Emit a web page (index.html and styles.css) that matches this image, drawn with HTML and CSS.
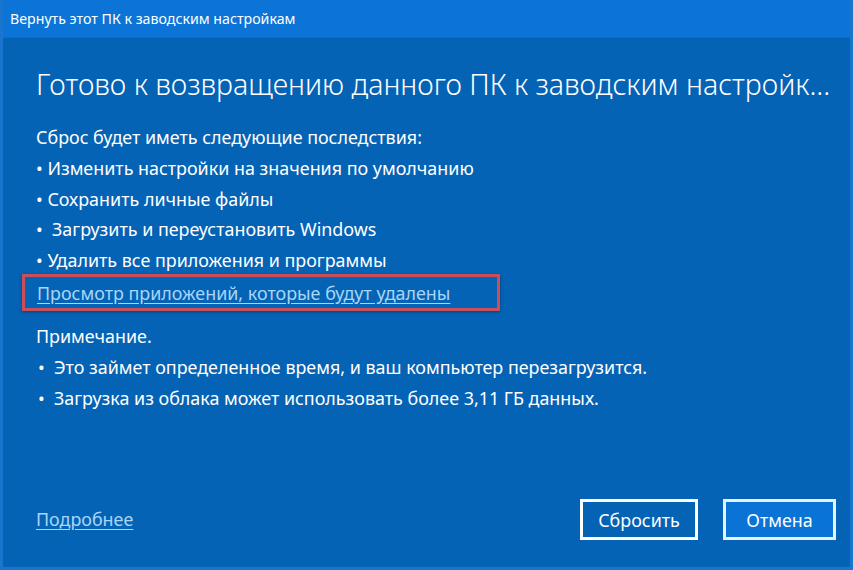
FILE: index.html
```html
<!DOCTYPE html>
<html lang="ru">
<head>
  <meta charset="UTF-8" />
  <meta name="viewport" content="width=device-width, initial-scale=1.0"/>
  <title>Вернуть этот ПК к заводским настройкам</title>
  <link rel="stylesheet" href="styles.css">
</head>
<body>

  <div class="window">
    <!-- Title bar -->
    <div class="titlebar">Вернуть этот ПК к заводским настройкам</div>

    <div class="content">
      <h1 class="heading">Готово к возвращению данного ПК к заводским настройк...</h1>

      <p class="line">Сброс будет иметь следующие последствия:</p>
      <p class="line">• Изменить настройки на значения по умолчанию</p>
      <p class="line">• Сохранить личные файлы</p>
      <p class="line">•&nbsp; Загрузить и переустановить Windows</p>
      <p class="line">• Удалить все приложения и программы</p>

      <div class="highlight">
        <a href="#" class="link">Просмотр приложений, которые будут удалены</a>
      </div>

      <p class="line note">Примечание.</p>
      <ul class="notes">
        <li>Это займет определенное время, и ваш компьютер перезагрузится.</li>
        <li>Загрузка из облака может использовать более 3,11 ГБ данных.</li>
      </ul>
    </div>

    <!-- Footer -->
    <div class="footer">
      <a href="#" class="link">Подробнее</a>
      <div class="buttons">
        <button class="btn">Сбросить</button>
        <button class="btn btn-primary">Отмена</button>
      </div>
    </div>
  </div>

</body>
</html>
```

FILE: styles.css
```css
* {
  box-sizing: border-box;
  margin: 0;
  padding: 0;
}

body {
  font-family: "Segoe UI", "Noto Sans", sans-serif;
  background: #0563b5;
  color: #fff;
}

.window {
  width: 853px;
  height: 570px;
  display: flex;
  flex-direction: column;
  background: #0563b5;
  border-left: 3px solid #1a75cf;
  border-right: 3px solid #1a75cf;
  border-bottom: 3px solid #1a75cf;
}

.titlebar {
  height: 38px;
  line-height: 38px;
  padding-left: 7px;
  font-size: 14.2px;
  background: #0b74d6;
  border-bottom: 1px solid #0d6cc4;
}

.content {
  flex: 1;
  padding: 26px 0 0 33px;
}

.heading {
  font-size: 28.5px;
  font-weight: 300;
  line-height: 40px;
  white-space: nowrap;
  overflow: hidden;
  margin-bottom: 18px;
}

.line {
  font-size: 17.9px;
  line-height: 30.8px;
}

.highlight {
  width: 478px;
  height: 37px;
  margin: -2px 0 0 -14px;
  padding: 2px 0 0 12px;
  border: 3px solid #c9505a;
  box-shadow: 0 1px 3px rgba(0, 0, 0, 0.35);
}

.link {
  color: #a8d6f8;
  font-size: 17.9px;
  line-height: 28px;
  text-decoration: underline;
  text-underline-offset: 3px;
}

.note {
  margin-top: 10px;
}

.notes {
  list-style: none;
}

.notes li {
  position: relative;
  padding-left: 18px;
  font-size: 17.9px;
  line-height: 30.8px;
}

.notes li::before {
  content: "•";
  position: absolute;
  left: 2px;
}

.footer {
  height: 96px;
  display: flex;
  align-items: flex-start;
  justify-content: space-between;
  padding: 28px 14px 0 33px;
}

.footer .link {
  margin-top: 6px;
}

.buttons {
  display: flex;
  gap: 25px;
}

.btn {
  width: 118px;
  height: 41px;
  font-family: "Segoe UI", "Noto Sans", sans-serif;
  font-size: 17.9px;
  color: #fff;
  background: #0563b5;
  border: 3px solid #fff;
  cursor: pointer;
}

.btn-primary {
  width: 113px;
  background: #0a74d6;
  border-color: #e8f1fa;
}
```
